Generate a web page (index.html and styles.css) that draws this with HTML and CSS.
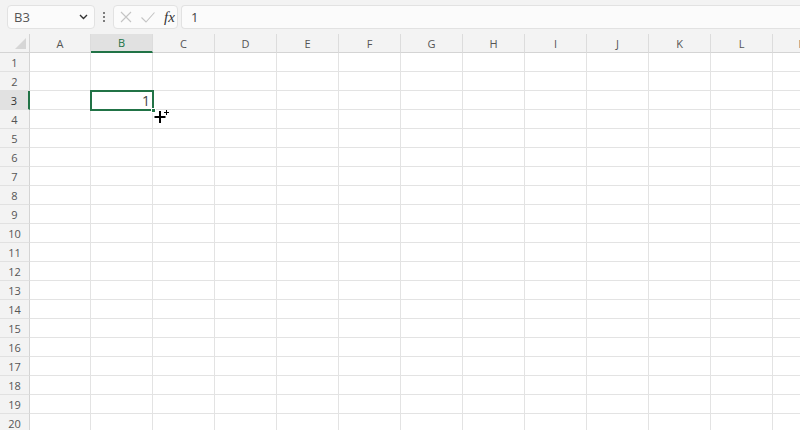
FILE: index.html
```
<!DOCTYPE html>
<html lang="en">
<head>
  <meta charset="UTF-8">
  <meta name="viewport" content="width=device-width, initial-scale=1.0">
  <title>Book1</title>
  <link rel="stylesheet" href="styles.css">
</head>
<body>
  <div class="toolbar">
    <div class="name-box">
      <span>B3</span>
      <svg class="chevron" width="9" height="6" viewBox="0 0 9 6"><path d="M1 1 L4.5 4.5 L8 1" fill="none" stroke="#333" stroke-width="1.4"/></svg>
    </div>
    <div class="more-dots"><i></i><i></i><i></i></div>
    <div class="fx-box">
      <svg width="14" height="14" viewBox="0 0 14 14"><path d="M2 2 L12 12 M12 2 L2 12" stroke="#c4c4c4" stroke-width="1.1" fill="none"/></svg>
      <svg width="16" height="14" viewBox="0 0 16 14"><path d="M1.5 7.5 L6 12 L14.5 2.5" stroke="#c4c4c4" stroke-width="1.1" fill="none"/></svg>
      <span class="fx">fx</span>
    </div>
    <div class="formula">1</div>
  </div>

  <div class="sheet">
    <div class="grid" id="grid"></div>
    <svg class="cursor" width="16" height="16" viewBox="0 0 16 16">
      <path d="M6 2 V14 M0.5 8 H11.5" stroke="#000" stroke-width="2" fill="none"/>
      <path d="M12.5 1 V6 M10 3.5 H15" stroke="#000" stroke-width="1" fill="none"/>
    </svg>
  </div>

  <script>
const cols = ['A', 'B', 'C', 'D', 'E', 'F', 'G', 'H', 'I', 'J', 'K', 'L', 'M'];
const grid = document.getElementById('grid');

function cell(cls, text) {
  const div = document.createElement('div');
  div.className = cls;
  if (text) div.textContent = text;
  grid.appendChild(div);
  return div;
}

cell('corner');
cols.forEach(c => cell(c === 'B' ? 'col-head selected' : 'col-head', c));

for (let r = 1; r <= 21; r++) {
  cell(r === 3 ? 'row-head selected' : 'row-head', String(r));
  cols.forEach(c => {
    if (r === 3 && c === 'B') {
      const active = cell('cell active');
      active.innerHTML = '<span class="value">1</span><span class="handle"></span>';
    } else {
      cell('cell');
    }
  });
}
  </script>
</body>
</html>
```

FILE: styles.css
```
body {
  margin: 0;
  background: #fff;
  font-family: "Open Sans", "Noto Sans", sans-serif;
  color: #444;
  overflow: hidden;
}

/* Formula bar */
.toolbar {
  height: 34px;
  background: #f3f3f3;
  display: flex;
  align-items: center;
  padding-left: 7px;
  box-sizing: border-box;
}
.name-box {
  width: 88px;
  height: 24px;
  box-sizing: border-box;
  border: 1px solid #e2e2e2;
  border-radius: 4px;
  background: #fbfbfb;
  display: flex;
  align-items: center;
  justify-content: space-between;
  padding: 0 6px 0 6px;
  font-size: 13px;
  color: #555;
}
.more-dots {
  width: 18px;
  display: flex;
  flex-direction: column;
  align-items: center;
  gap: 2px;
}
.more-dots i {
  width: 2px;
  height: 2px;
  background: #555;
  border-radius: 1px;
}
.fx-box {
  width: 65px;
  height: 24px;
  box-sizing: border-box;
  border: 1px solid #e2e2e2;
  border-radius: 4px;
  background: #fbfbfb;
  display: flex;
  align-items: center;
  gap: 7px;
  padding-left: 5px;
}
.fx {
  font-family: "Liberation Serif", serif;
  font-style: italic;
  font-size: 15px;
  color: #333;
  margin-left: 1px;
}
.formula {
  flex: 1;
  height: 24px;
  box-sizing: border-box;
  margin-left: 3px;
  border: 1px solid #e2e2e2;
  border-right: none;
  border-radius: 4px 0 0 4px;
  background: #fbfbfb;
  display: flex;
  align-items: center;
  padding-left: 9px;
  font-size: 13px;
  color: #444;
}

/* Sheet grid */
.sheet {
  position: relative;
  overflow: hidden;
  height: 396px;
}
.grid {
  display: grid;
  grid-template-columns: 30px 61px repeat(12, 62px);
  grid-auto-rows: 19px;
  width: max-content;
}
.corner,
.col-head,
.row-head,
.cell {
  box-sizing: border-box;
}
.corner {
  background: #f3f3f3;
  border-right: 1px solid #d4d4d4;
  border-bottom: 1px solid #d4d4d4;
  position: relative;
}
.corner::after {
  content: "";
  position: absolute;
  right: 3px;
  bottom: 3px;
  border-left: 11px solid transparent;
  border-bottom: 11px solid #d6d6d6;
}
.col-head {
  background: #f3f3f3;
  border-right: 1px solid #dcdcdc;
  border-bottom: 1px solid #d4d4d4;
  font-size: 11px;
  color: #555;
  display: flex;
  align-items: center;
  justify-content: center;
}
.col-head.selected {
  background: #e1e1e1;
  color: #217346;
  border-bottom: 2px solid #217346;
}
.row-head {
  background: #f3f3f3;
  border-right: 1px solid #d4d4d4;
  border-bottom: 1px solid #e1e1e1;
  font-size: 11px;
  color: #555;
  display: flex;
  align-items: center;
  justify-content: center;
}
.row-head.selected {
  background: #e1e1e1;
  color: #333;
  border-right: 2px solid #217346;
}
.cell {
  border-right: 1px solid #e3e3e3;
  border-bottom: 1px solid #e3e3e3;
}
.cell.active {
  position: relative;
  border: none;
}
.cell.active::before {
  content: "";
  position: absolute;
  left: -1px;
  top: -1px;
  right: -1px;
  bottom: -1px;
  border: 2px solid #217346;
}
.value {
  display: block;
  text-align: right;
  padding-right: 3px;
  font-size: 14px;
  line-height: 19px;
  color: #444;
}
.handle {
  position: absolute;
  right: -3px;
  bottom: -3px;
  width: 5px;
  height: 5px;
  background: #217346;
  border: 1px solid #fff;
  box-sizing: border-box;
}
.cursor {
  position: absolute;
  left: 154px;
  top: 75px;
}
```
